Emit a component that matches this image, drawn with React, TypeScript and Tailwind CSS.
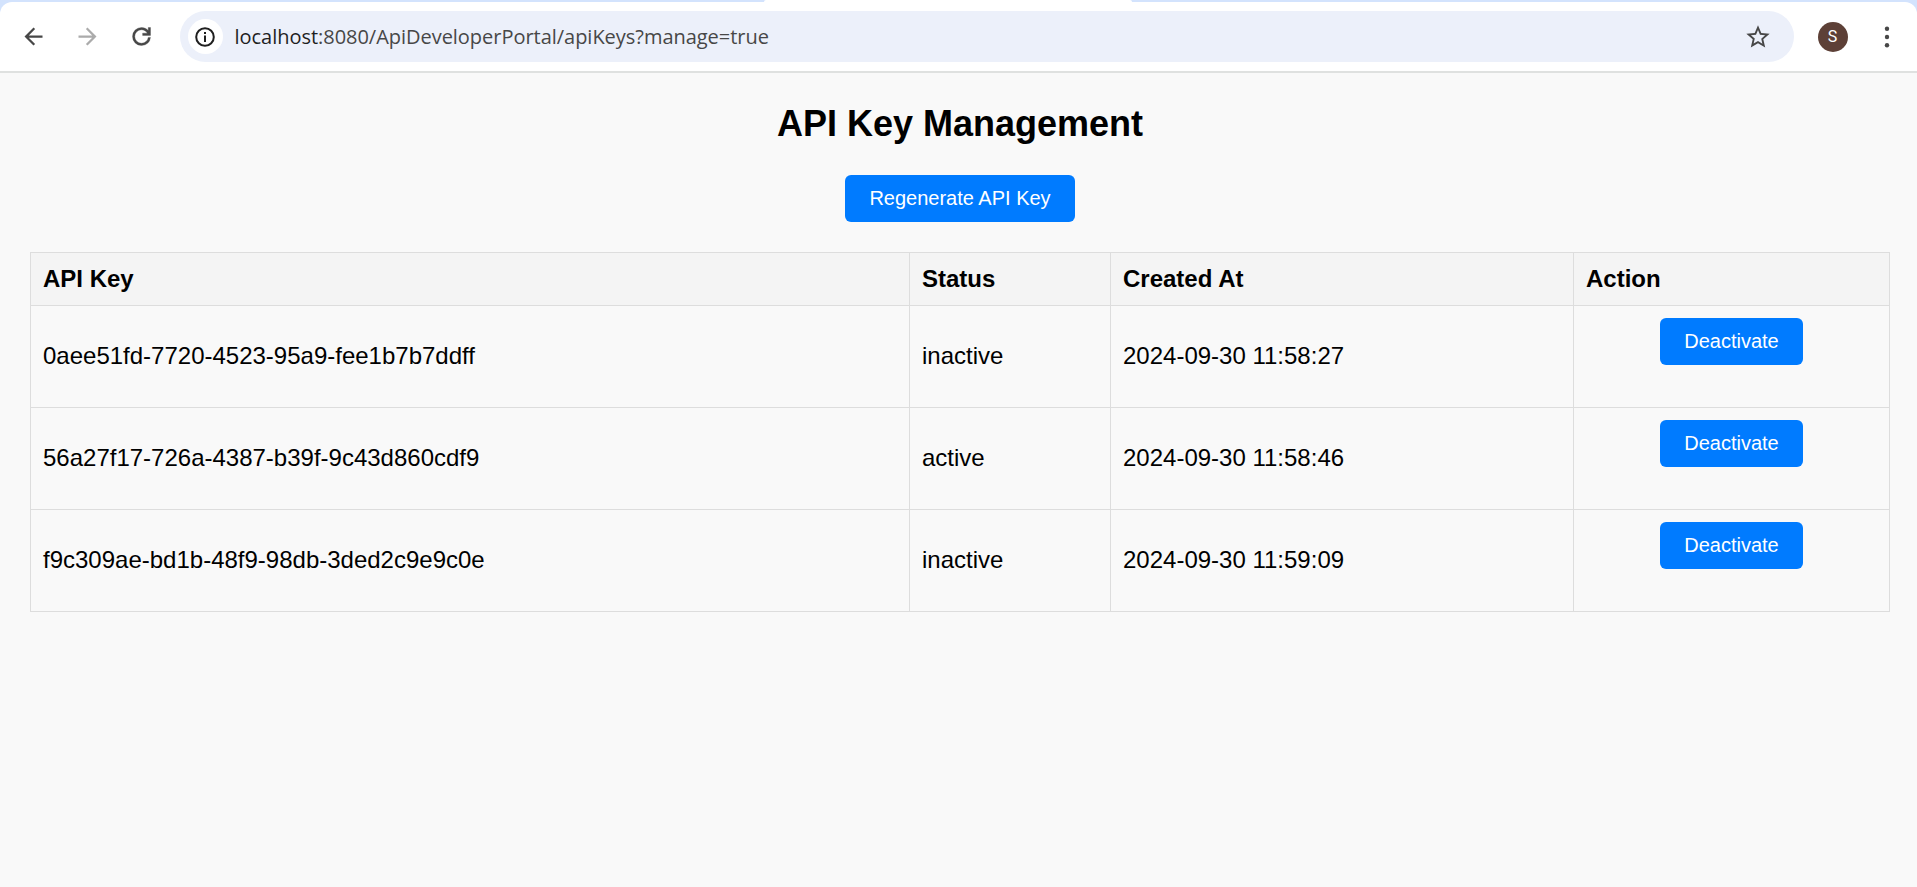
import { MdArrowBack, MdArrowForward, MdStarOutline } from "react-icons/md";

type KeyRow = { key: string; status: string; createdAt: string };

const rows: KeyRow[] = [
  { key: "0aee51fd-7720-4523-95a9-fee1b7b7ddff", status: "inactive", createdAt: "2024-09-30 11:58:27" },
  { key: "56a27f17-726a-4387-b39f-9c43d860cdf9", status: "active", createdAt: "2024-09-30 11:58:46" },
  { key: "f9c309ae-bd1b-48f9-98db-3ded2c9e9c0e", status: "inactive", createdAt: "2024-09-30 11:59:09" },
];

function BrowserBar() {
  return (
    <header className="bg-[#d3e3fd]">
      <div className="flex h-[2px] justify-between">
        <div className="w-[764px]" />
        <div className="w-[368px] rounded-t-[2px] bg-white" />
        <div className="w-[785px]" />
      </div>
      <div className="flex h-[71px] items-center rounded-t-[12px] border-b-2 border-[#dfe1e0] bg-white">
        <MdArrowBack className="ml-[19.500px] size-[27px] shrink-0 text-[#474747]" />
        <MdArrowForward className="ml-[27px] size-[27px] shrink-0 text-[#ababab]" />
        <svg className="ml-[27px] size-[27px] shrink-0" viewBox="0 0 24 24" fill="#474747" stroke="#474747" strokeWidth="0.300">
          <path d="M12 20q-3.350 0-5.675-2.325T4 12t2.325-5.675T12 4q1.725 0 3.300.7T18 6.750V4h2v7h-7V9h4.200q-.8-1.400-2.200-2.200T12 6Q9.500 6 7.750 7.750T6 12t1.750 4.250T12 18t4.250-1.750Q17.700 14.800 17.950 12.800h2.020q-.27 2.950-2.300 5T12 20Z" />
        </svg>
        <div className="ml-[25px] flex h-[51px] w-[1614px] shrink-0 items-center rounded-full bg-[#ecf0fa]">
          <div className="ml-2 flex size-[35px] shrink-0 items-center justify-center rounded-full bg-white">
            <svg className="size-5" viewBox="0 0 20 20" fill="none" stroke="#1f1f1f" strokeWidth="2">
              <circle cx="10" cy="10" r="8.800" />
              <path d="M10 8.500v6.500M10 5v2" />
            </svg>
          </div>
          <div className="ml-[12px] text-[20px] leading-[26px] tracking-[-0.030px] whitespace-nowrap text-[#474747] [font-family:'Open_Sans',sans-serif]">
            <span className="text-[#1f1f1f]">localhost</span>:8080/ApiDeveloperPortal/apiKeys?manage=true
          </div>
          <MdStarOutline className="mr-[22px] ml-auto size-[28px] text-[#474747]" />
        </div>
        <div className="ml-6 flex size-[30px] shrink-0 items-center justify-center rounded-full bg-[#5d4037] text-[16px] text-white [font-family:Roboto,sans-serif]">
          S
        </div>
        <svg className="ml-[27px] size-6 shrink-0" viewBox="0 0 24 24" fill="#474747">
          <circle cx="12" cy="3.700" r="2.200" />
          <circle cx="12" cy="12" r="2.200" />
          <circle cx="12" cy="20.300" r="2.200" />
        </svg>
      </div>
    </header>
  );
}

function ActionButton({ label, width }: { label: string; width: string }) {
  return (
    <button className={`${width} h-[47px] rounded-[6px] bg-[#007bff] pb-px text-[20px] leading-[23px] whitespace-nowrap text-white`}>
      {label}
    </button>
  );
}

export default function App() {
  return (
    <div className="min-h-[887px] bg-[#f9f9f9] text-black [font-family:'Liberation_Sans',Arial,sans-serif]">
      <BrowserBar />
      <main className="flex flex-col items-center pr-[27px] pl-[30px]">
        <h2 className="mt-[30px] text-[36px] leading-[42px] font-bold">API Key Management</h2>
        <div className="mt-[30px] flex">
          <ActionButton label="Regenerate API Key" width="w-[230px]" />
        </div>
        <table className="mt-[30px] w-[1860px] table-fixed border-collapse text-[24px] leading-[28px]">
          <colgroup>
            <col className="w-[879px]" />
            <col className="w-[201px]" />
            <col className="w-[463px]" />
            <col className="w-[316px]" />
          </colgroup>
          <thead>
            <tr className="h-[53px] bg-[#f4f4f4] text-left">
              {["API Key", "Status", "Created At", "Action"].map((title) => (
                <th key={title} className="border border-[#dddddd] px-3 py-0 font-bold">
                  {title}
                </th>
              ))}
            </tr>
          </thead>
          <tbody>
            {rows.map((row) => (
              <tr key={row.key} className="h-[102px]">
                <td className="border border-[#dddddd] px-3 pb-[2px]">{row.key}</td>
                <td className="border border-[#dddddd] px-3 pb-[2px]">{row.status}</td>
                <td className="border border-[#dddddd] px-3 pb-[2px]">{row.createdAt}</td>
                <td className="border border-[#dddddd] px-3 pt-3 align-top">
                  <div className="flex justify-center">
                    <ActionButton label="Deactivate" width="w-[143px]" />
                  </div>
                </td>
              </tr>
            ))}
          </tbody>
        </table>
      </main>
    </div>
  );
}
